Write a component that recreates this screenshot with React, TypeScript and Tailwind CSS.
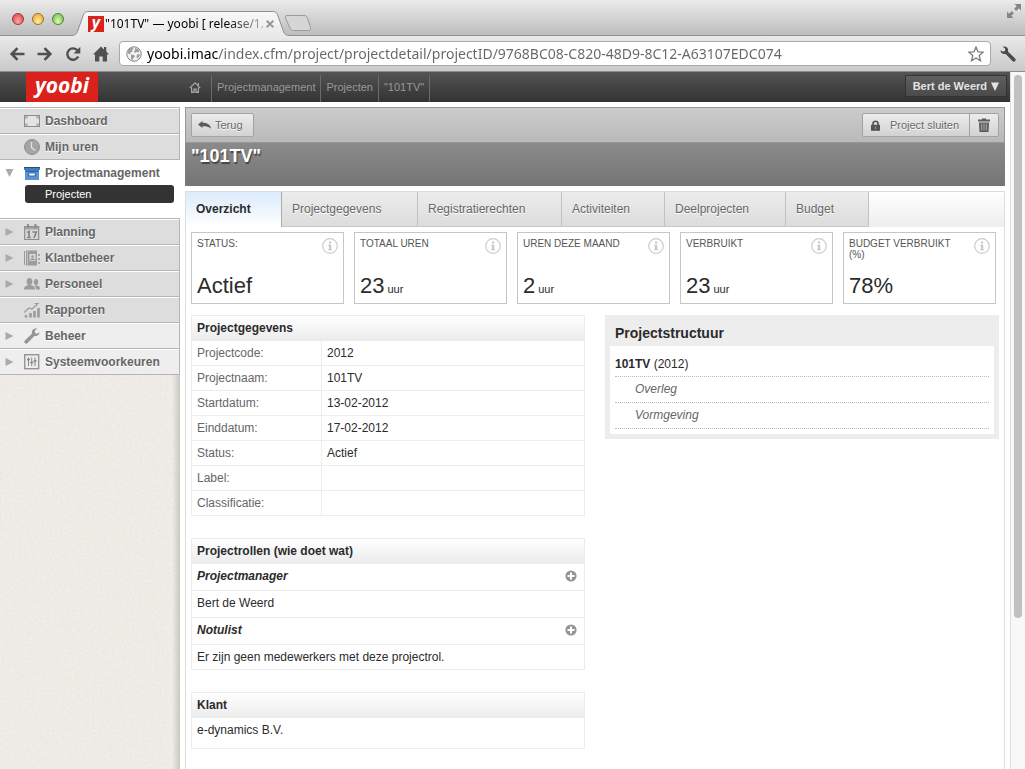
import { useState } from "react";
import type { ReactNode } from "react";
import clsx from "clsx";

interface MenuItem {
  label: string;
  icon: ReactNode;
  expandable?: boolean;
  light?: boolean;
}

interface Stat {
  label: string;
  value: string;
  unit?: string;
}

const DashboardIcon = () => (
  <svg viewBox="0 0 16 16" className="w-4 h-4">
    <rect x="0.5" y="2.5" width="15" height="11" fill="#b3b3b3" stroke="#8f8f8f" />
    <path d="M4 3h8c0 2 1 3 3 3v4c-2 0-3 1-3 3H4c0-2-1-3-3-3V6c2 0 3-1 3-3z" fill="#e4e4e4" />
  </svg>
);

const ClockIcon = () => (
  <svg viewBox="0 0 16 16" className="w-4 h-4">
    <circle cx="8" cy="8" r="7.5" fill="#a5a5a5" stroke="#8f8f8f" />
    <path d="M7.5 3v5.5l3.5 3" fill="none" stroke="#e2e2e2" strokeWidth="1.3" />
  </svg>
);

const ArchiveIcon = () => (
  <svg viewBox="0 0 16 16" className="w-4 h-4">
    <rect x="0" y="2" width="16" height="3" fill="#1d4f8c" />
    <rect x="0" y="3.5" width="16" height="1" fill="#6fa5dc" />
    <rect x="1" y="5" width="14" height="10" fill="#5a93d0" />
    <rect x="1.5" y="5.5" width="13" height="1.5" fill="#2c65a6" />
    <rect x="4" y="7.5" width="8" height="4" rx="1" fill="#3a74b5" />
    <rect x="5" y="8.5" width="6" height="2" rx="1" fill="#eef5fc" />
  </svg>
);

const CalendarIcon = () => (
  <svg viewBox="0 0 16 16" className="w-4 h-4">
    <path d="M.7 2.5h14v13h-14z" fill="#d8d8d8" stroke="#8c8c8c" strokeWidth="1.2" />
    <path d="M1 3h13.5v2.5H1z" fill="#a5a5a5" />
    <path d="M4 0v4M11.5 0v4" stroke="#8c8c8c" strokeWidth="2" />
    <path d="M3.2 8.5L5 7.5v6.5M3.2 13.5h3.6M8.3 8h4l-2.3 6" fill="none" stroke="#858585" strokeWidth="1.7" />
  </svg>
);

const AddressBookIcon = () => (
  <svg viewBox="0 0 16 16" className="w-4 h-4">
    <path d="M0.5 1v14" stroke="#999" />
    <rect x="2" y="0.5" width="11" height="15" fill="#9c9c9c" />
    <path d="M3.5 1v14" stroke="#d5d5d5" strokeWidth="0.6" />
    <rect x="5.5" y="4" width="6" height="7" fill="#dcdcdc" />
    <circle cx="8.5" cy="6.5" r="1.3" fill="#999" />
    <path d="M6 10.2c0-2.6 5-2.6 5 0z" fill="#999" />
    <path d="M15 4v2M15 8v2M15 12v2" stroke="#999" strokeWidth="1.6" />
  </svg>
);

const PeopleIcon = () => (
  <svg viewBox="0 0 16 16" className="w-4 h-4" fill="#9c9c9c">
    <ellipse cx="5.5" cy="5.5" rx="2.8" ry="3.5" />
    <path d="M0 13.5c0-3 1.5-3.2 4-4.5h3c2.5 1.3 4 1.5 4 4.5z" />
    <ellipse cx="12" cy="6" rx="2.2" ry="3" />
    <path d="M10.5 9.5h3c1.5.8 2.5 1 2.5 4h-4c0-2-.5-3-2-3.5z" />
  </svg>
);

const ReportIcon = () => (
  <svg viewBox="0 0 16 16" className="w-4 h-4">
    <path d="M2 13v2.5M6.5 11v4.5M10.5 9v6.5M14.5 6v9.5" stroke="#9c9c9c" strokeWidth="2.6" />
    <path d="M0 10.5l5-4.5 3 1 5.5-5M10.5 1.5h4.5" fill="none" stroke="#9c9c9c" strokeWidth="1.2" />
  </svg>
);

const WrenchIcon = ({ className, color }: { className: string; color: string }) => (
  <svg viewBox="0 0 16 16" className={className}>
    <path
      d="M15.5 4.2l-2.6 1.6-2-1 0-2.3L13.3.8C11.3-.1 8.6.7 8 3.2c-.2.9-.1 1.7.1 2.3L.9 12.4c-.9.9-.8 2 0 2.7.8.8 1.9.7 2.7-.2l6.7-7c2.7.8 5.2-.9 5.2-3.7z"
      fill={color}
    />
  </svg>
);

const SlidersIcon = () => (
  <svg viewBox="0 0 16 16" className="w-4 h-4">
    <rect x="0.7" y="0.7" width="14" height="14" fill="#ececec" stroke="#959595" strokeWidth="1.4" />
    <path d="M4.5 3.5v8.5M7.7 3.5v8.5M11 3.5v8.5" stroke="#888" />
    <path d="M3 5.5h3M6.2 8.5h3M9.5 7h3" stroke="#888" strokeWidth="1.4" />
  </svg>
);

const InfoIcon = () => (
  <svg viewBox="0 0 16 16" className="w-4 h-4 shrink-0">
    <circle cx="8" cy="8" r="7.3" fill="none" stroke="#ccc" strokeWidth="1.2" />
    <path d="M7 3.5h2.2v2H7zM6 6.7h3.2v4.5h1v1.1H6v-1.1h1V7.8H6z" fill="#c8c8c8" />
  </svg>
);

const PlusIcon = () => (
  <svg viewBox="0 0 12 12" className="w-3 h-3">
    <circle cx="6" cy="6" r="5.6" fill="#949494" />
    <path d="M6 2.5v7M2.5 6h7" stroke="#fff" strokeWidth="2" />
  </svg>
);

const menuTop: MenuItem[] = [
  { label: "Dashboard", icon: <DashboardIcon /> },
  { label: "Mijn uren", icon: <ClockIcon /> },
];

const menuBottom: MenuItem[] = [
  { label: "Planning", icon: <CalendarIcon />, expandable: true },
  { label: "Klantbeheer", icon: <AddressBookIcon />, expandable: true },
  { label: "Personeel", icon: <PeopleIcon />, expandable: true },
  { label: "Rapporten", icon: <ReportIcon /> },
  {
    label: "Beheer",
    icon: <WrenchIcon className="w-4 h-4" color="#959595" />,
    expandable: true,
    light: true,
  },
  { label: "Systeemvoorkeuren", icon: <SlidersIcon />, expandable: true, light: true },
];

const tabs = [
  { label: "Overzicht", width: "w-24" },
  { label: "Projectgegevens", width: "w-[136px]" },
  { label: "Registratierechten", width: "w-36" },
  { label: "Activiteiten", width: "w-[103px]" },
  { label: "Deelprojecten", width: "w-[121px]" },
  { label: "Budget", width: "w-[83px]" },
];

const stats: Stat[] = [
  { label: "STATUS:", value: "Actief" },
  { label: "TOTAAL UREN", value: "23", unit: "uur" },
  { label: "UREN DEZE MAAND", value: "2", unit: "uur" },
  { label: "VERBRUIKT", value: "23", unit: "uur" },
  { label: "BUDGET VERBRUIKT (%)", value: "78%" },
];

const details = [
  ["Projectcode:", "2012"],
  ["Projectnaam:", "101TV"],
  ["Startdatum:", "13-02-2012"],
  ["Einddatum:", "17-02-2012"],
  ["Status:", "Actief"],
  ["Label:", ""],
  ["Classificatie:", ""],
];

const roles = [
  { name: "Projectmanager", member: "Bert de Weerd" },
  { name: "Notulist", member: "Er zijn geen medewerkers met deze projectrol." },
];

const TitleBar = () => (
  <div className="flex h-9 items-end bg-linear-to-b from-[#ebebeb] to-[#bdbdbd] border-b border-[#929292]">
    <div className="flex gap-2 pl-3 pb-[10px]">
      <button aria-label="Sluit venster" className="w-3 h-3 rounded-full border border-[#9a3a38] bg-radial-[at_50%_75%] from-[#ffa9a5] to-[#d8383c]" />
      <button aria-label="Minimaliseer" className="w-3 h-3 rounded-full border border-[#a0722c] bg-radial-[at_50%_75%] from-[#fff0a0] to-[#e59b2c]" />
      <button aria-label="Vergroot" className="w-3 h-3 rounded-full border border-[#53853a] bg-radial-[at_50%_75%] from-[#dcffb0] to-[#64b344]" />
    </div>
    <div className="relative -mb-px ml-2 w-[220px] h-[25px]">
      <svg viewBox="0 0 220 25" className="absolute inset-0 w-full h-full">
        <defs>
          <linearGradient id="tab" x1="0" y1="0" x2="0" y2="1">
            <stop offset="0" stopColor="#f8f8f8" />
            <stop offset="1" stopColor="#e9e9e9" />
          </linearGradient>
        </defs>
        <path
          d="M0 25v-1c4 0 5-2 6-5L11 5c1-3 2-4.5 6-4.5h183c4 0 5 1.5 6 4.5l5 14c1 3 2 5 6 5v1z"
          fill="url(#tab)"
        />
        <path
          d="M0 24.5c4 0 5-2.5 6-5.5L11 5c1-3 2-4.5 6-4.5h183c4 0 5 1.5 6 4.5l5 14c1 3 2 5.5 6 5.5"
          fill="none"
          stroke="#8e8e8e"
        />
      </svg>
      <div className="relative flex items-center h-full pl-4 pr-[18px]">
        <span className="flex items-center justify-center w-4 h-4 bg-[#da211c] text-white font-['Open_Sans',sans-serif] font-bold italic text-base leading-3 pb-1">
          y
        </span>
        <span className="flex-1 ml-px whitespace-nowrap text-xs text-transparent bg-clip-text bg-linear-to-r from-black from-75% to-[#00000033] font-['Noto_Sans',sans-serif]">
          "101TV" — yoobi [ release/1.
        </span>
        <button aria-label="Sluit tabblad">
          <svg viewBox="0 0 8 8" className="w-2 h-2">
            <path d="M0.7 0.7l6.6 6.6M7.3 0.7L0.7 7.3" stroke="#999" strokeWidth="2" />
          </svg>
        </button>
      </div>
    </div>
    <button aria-label="Nieuw tabblad" className="-ml-2 pb-1">
      <svg viewBox="0 0 28 16" className="w-7 h-4">
        <path
          d="M3 .5h17c2 0 3 1 3.5 2.5l3 9.5c.5 2-.5 3-2 3H9.5c-2 0-3-1-3.5-2.5L1.5 3C1 1.5 1.5.5 3 .5z"
          fill="#d6d6d6"
          stroke="#9b9b9b"
        />
      </svg>
    </button>
    <button aria-label="Volledig scherm" className="ml-auto self-start pt-1 pr-1">
      <svg viewBox="0 0 14 14" className="w-[14px] h-[14px]" fill="#858585">
        <path d="M7.5 0H14v6.5l-2.2-2.2-2.6 2.6-2.1-2.1 2.6-2.6zM6.5 14H0V7.5l2.2 2.2 2.6-2.6 2.1 2.1-2.6 2.6z" />
      </svg>
    </button>
  </div>
);

const ToolBar = () => {
  const [url, setUrl] = useState(
    "yoobi.imac/index.cfm/project/projectdetail/projectID/9768BC08-C820-48D9-8C12-A63107EDC074",
  );

  return (
    <div className="flex items-center h-9 pl-[9px] pr-2 bg-linear-to-b from-[#eaeaea] to-[#c9c9c9] border-b border-[#8d8d8d]">
      <div className="flex gap-3 mr-[10px]">
        <button aria-label="Vorige">
          <svg viewBox="0 0 16 16" className="w-4 h-4" fill="none" stroke="#505050" strokeWidth="2.6">
            <path d="M8.5 2.2L2.7 8l5.8 5.8M3 8h12.5" />
          </svg>
        </button>
        <button aria-label="Volgende">
          <svg viewBox="0 0 16 16" className="w-4 h-4" fill="none" stroke="#505050" strokeWidth="2.6">
            <path d="M7.5 2.2L13.3 8l-5.8 5.8M13 8H.5" />
          </svg>
        </button>
        <button aria-label="Vernieuwen">
          <svg viewBox="0 0 16 16" className="w-4 h-4">
            <path d="M12.5 4.5A5.7 5.7 0 1 0 13.2 10.5" fill="none" stroke="#505050" strokeWidth="2.4" />
            <path d="M15.3.8v6.7H8.6z" fill="#505050" />
          </svg>
        </button>
        <button aria-label="Startpagina">
          <svg viewBox="0 0 16 16" className="w-4 h-4" fill="#505050">
            <path d="M8 .5l3 3V1h2.3v4.5L16 8.5h-2V15.5H9.7v-5H6.3v5H2V8.5H0z" />
          </svg>
        </button>
      </div>
      <div className="flex flex-1 items-center h-[25px] px-[6px] rounded-[4px] border border-[#a9a9a9] bg-white">
        <svg viewBox="0 0 16 16" className="w-4 h-4">
          <circle cx="8" cy="8" r="7.2" fill="#f4f4f4" stroke="#808080" />
          <path
            d="M2 5C3 3 5 1.7 7 1.5l.5 1.5-1.5 1L6.5 5.5l-2 1-.5 2-1.8-1zM9 2l3 1 1.5 2-1 1.5-2-.5-1.5 1-1-1.5 1-1.5zM5 8.5l3 .5 1 1.5-2 2-.5 2-1.5-1.5zM11 8.5l3-.5-1 3-2 1.5-.5-2z"
            fill="#9c9c9c"
          />
        </svg>
        <input
          aria-label="Adres"
          value={url}
          onChange={(e) => setUrl(e.target.value)}
          className="flex-1 ml-[5px] text-sm text-transparent caret-black bg-clip-text bg-linear-to-r from-black from-[71px] to-[#666] to-[71px] font-['Noto_Sans',sans-serif] focus:outline-none"
        />
        <button aria-label="Bladwijzer">
          <svg viewBox="0 0 16 16" className="w-4 h-4">
            <path
              d="M8 1l2 4.8 5.2.4-4 3.4 1.3 5.2L8 12l-4.5 2.8 1.3-5.2-4-3.4L6 5.8z"
              fill="#fff"
              stroke="#7a7a7a"
              strokeWidth="1.3"
            />
          </svg>
        </button>
      </div>
      <button aria-label="Instellingen" className="ml-2 -scale-x-100">
        <WrenchIcon className="w-[18px] h-4" color="#4a4a4a" />
      </button>
    </div>
  );
};

const AppHeader = () => (
  <header className="flex items-stretch h-[30px] pl-[26px] pr-[3px] bg-linear-to-b from-[#545454] to-[#333] text-[11px] text-[#999]">
    <a
      href="#"
      className="flex items-center justify-center w-[72px] pb-1 bg-[#da211c] text-white text-[21px] leading-6 font-bold italic font-['Open_Sans',sans-serif]"
    >
      yoobi
    </a>
    <nav aria-label="Kruimelpad" className="flex ml-[84px] pt-[3px] leading-6">
      <a href="#" aria-label="Home" className="flex items-center pl-[5px] pr-2 border-r border-[#6b6b6b]">
        <svg viewBox="0 0 16 16" className="w-4 h-4 pb-1" fill="none" stroke="#a5a5a5" strokeWidth="1.7">
          <path d="M1 9.5L8 2.5l7 7M3.5 8.5v6.5h3.2v-4h2.6v4h3.2V8.5M12.5 6V2.5" />
        </svg>
      </a>
      <a href="#" className="px-[5px] border-r border-[#6b6b6b]">Projectmanagement</a>
      <a href="#" className="px-[5px] border-r border-[#6b6b6b]">Projecten</a>
      <a href="#" className="px-[5px] border-r border-[#6b6b6b]">"101TV"</a>
    </nav>
    <button className="flex items-center self-start gap-1 mt-[3px] ml-auto h-[22px] px-[7px] border border-[#333] bg-linear-to-b from-[#606060] to-[#4a4a4a] text-[#e3e3e3] font-bold">
      Bert de Weerd
      <svg viewBox="0 0 8 9" className="w-2 h-[9px]" fill="#e3e3e3">
        <path d="M0 .5h8L4 9z" />
      </svg>
    </button>
  </header>
);

const MenuRow = ({ item }: { item: MenuItem }) => (
  <li>
    <a
      href="#"
      className={clsx(
        "flex items-center h-[26px] pl-[5px] border-r border-b border-[#b5b5b5] shadow-[inset_0_1px_0_#fff]",
        item.light ? "bg-[#eee]" : "bg-[#ddd]",
      )}
    >
      <svg viewBox="0 0 9 8" className="w-[9px] h-2 mr-[10px]">
        {item.expandable && <path d="M0.5 0l8 4-8 4z" fill="#aaa" />}
      </svg>
      {item.icon}
      <span className="ml-[5px]">{item.label}</span>
    </a>
  </li>
);

const Sidebar = () => (
  <aside className="flex flex-col w-[180px] shrink-0 text-xs font-bold text-[#666] [text-shadow:0_1px_0_#fff]">
    <ul className="border-t border-[#b5b5b5]">
      {menuTop.map((item) => (
        <MenuRow key={item.label} item={item} />
      ))}
    </ul>
    <div className="h-[58px] bg-white">
      <a href="#" className="flex items-center h-[25px] pl-[5px]">
        <svg viewBox="0 0 9 8" className="w-[9px] h-2 mr-[10px]">
          <path d="M0.5 0h8L4.5 8z" fill="#aaa" />
        </svg>
        <ArchiveIcon />
        <span className="ml-[5px]">Projectmanagement</span>
      </a>
      <a
        href="#"
        className="block h-[18px] ml-[25px] mr-[6px] pl-5 rounded-[3px] bg-[#333] text-[11px] leading-[18px] font-normal text-white [text-shadow:none]"
      >
        Projecten
      </a>
    </div>
    <ul className="border-t border-[#b5b5b5]">
      {menuBottom.map((item) => (
        <MenuRow key={item.label} item={item} />
      ))}
    </ul>
    <div className="relative flex-1 bg-[#efede7]">
      <svg className="absolute inset-0 w-full h-full opacity-10">
        <filter id="paper">
          <feTurbulence type="fractalNoise" baseFrequency="0.4" numOctaves="2" />
          <feColorMatrix values="0 0 0 0 0.5 0 0 0 0 0.45 0 0 0 0 0.35 0 0 2 0 -0.7" />
        </filter>
        <rect width="100%" height="100%" filter="url(#paper)" />
      </svg>
      <div className="absolute inset-y-0 right-0 w-2 bg-linear-to-r from-transparent to-[#00000026]" />
    </div>
  </aside>
);

const Panel = ({ title, children }: { title: string; children: ReactNode }) => (
  <section className="mb-[22px] border border-[#ececec]">
    <h2 className="h-[25px] pl-[5px] leading-6 font-bold bg-linear-to-b from-white to-[#ebebeb]">
      {title}
    </h2>
    {children}
  </section>
);

const Overview = () => (
  <div className="pl-[5px] pr-[5px] pt-[5px]">
    <div className="grid grid-cols-5 gap-[10px] pr-[3px]">
      {stats.map((stat) => (
        <div
          key={stat.label}
          className="flex flex-col justify-between h-[72px] pl-[5px] pr-[5px] pt-[5px] pb-[3px] border border-[#c6c6c6]"
        >
          <div className="flex items-start justify-between gap-2 h-4 text-[10px] leading-[11px] text-[#555]">
            <span>{stat.label}</span>
            <InfoIcon />
          </div>
          <p className="flex items-baseline gap-[3px] text-[22px] leading-7">
            {stat.value}
            {stat.unit && <span className="text-[11px] leading-3">{stat.unit}</span>}
          </p>
        </div>
      ))}
    </div>

    <div className="grid grid-cols-2 gap-5 mt-[11px] items-start">
      <div>
        <Panel title="Projectgegevens">
          <table className="w-full border-separate border-spacing-0">
            <tbody>
              {details.map(([label, value]) => (
                <tr key={label} className="group">
                  <th
                    scope="row"
                    className="w-[130px] h-[25px] group-last:h-6 p-0 pl-[5px] text-left font-normal text-[#666] border-r border-b group-last:border-b-0 border-[#ececec]"
                  >
                    {label}
                  </th>
                  <td className="p-0 pl-[5px] border-b group-last:border-b-0 border-[#ececec]">{value}</td>
                </tr>
              ))}
            </tbody>
          </table>
        </Panel>

        <Panel title="Projectrollen (wie doet wat)">
          {roles.map((role) => (
            <div key={role.name} className="group">
              <div className="flex items-start justify-between h-[27px] pl-[5px] pr-[7px] leading-6 border-b border-[#ececec]">
                <h3 className="font-bold italic">{role.name}</h3>
                <button aria-label={`${role.name} toevoegen`} className="pt-[6px]">
                  <PlusIcon />
                </button>
              </div>
              <p className="h-[27px] group-last:h-6 pl-[5px] leading-6 border-b group-last:border-b-0 border-[#ececec]">
                {role.member}
              </p>
            </div>
          ))}
        </Panel>

        <Panel title="Klant">
          <p className="h-[30px] pl-[5px] leading-6">e-dynamics B.V.</p>
        </Panel>
      </div>

      <section className="p-[5px] bg-[#ededed]">
        <h2 className="h-[26px] pl-[5px] text-sm leading-[26px] font-bold">Projectstructuur</h2>
        <ul className="px-[5px] pt-1 pb-[5px] bg-white">
          <li className="h-[27px] leading-7 border-b border-dotted border-[#bbb]">
            <b>101TV</b> (2012)
          </li>
          <li className="h-[26px] pl-5 leading-6 italic text-[#666] border-b border-dotted border-[#bbb]">
            Overleg
          </li>
          <li className="h-[26px] pl-5 leading-6 italic text-[#666] border-b border-dotted border-[#bbb]">
            Vormgeving
          </li>
        </ul>
      </section>
    </div>
  </div>
);

const buttonStyle =
  "flex items-center h-6 text-[11px] text-[#666] border border-[#a3a3a3] bg-linear-to-b from-[#ececec] to-[#d2d2d2] [text-shadow:0_1px_0_#fff]";

const ProjectPage = () => {
  const [activeTab, setActiveTab] = useState("Overzicht");

  return (
    <main className="flex flex-col flex-1 mx-[5px]">
      <div className="flex items-center justify-between h-9 px-[5px] border border-[#979797] bg-linear-to-b from-[#ccc] to-[#b9b9b9]">
        <button className={clsx(buttonStyle, "pl-[6px] pr-[10px] rounded-[2px]")}>
          <svg viewBox="0 0 13 8" className="w-[13px] h-2 mr-1">
            <path d="M0 3.5L4.5 0v1.8C9 1.8 12.5 3.5 13 7.8 11 5.5 8.5 5.2 4.5 5.2V7z" fill="#5a5a5a" />
          </svg>
          Terug
        </button>
        <div className="flex">
          <button className={clsx(buttonStyle, "pl-2 pr-[10px] rounded-l-[2px]")}>
            <svg viewBox="0 0 9 11" className="w-[9px] h-[11px] mr-[10px]">
              <path d="M2 6V3.7a2.5 2.5 0 0 1 5 0V6" fill="none" stroke="#555" strokeWidth="1.6" />
              <rect x="0" y="4.8" width="9" height="6" fill="#555" />
              <path d="M4.5 6.5v2.5" stroke="#999" strokeWidth="1.2" />
            </svg>
            Project sluiten
          </button>
          <button aria-label="Verwijderen" className={clsx(buttonStyle, "-ml-px px-2 rounded-r-[2px]")}>
            <svg viewBox="0 0 12 14" className="w-3 h-[14px]">
              <path d="M4 1.5V.5h4v1h4v2H0v-2zM1 4.5h10L10.5 14h-9z" fill="#5a5a5a" />
              <path d="M3.7 5.5v7M6 5.5v7M8.3 5.5v7" stroke="#c4c4c4" strokeWidth="0.8" />
            </svg>
          </button>
        </div>
      </div>
      <h1 className="h-[43px] pl-[6px] pt-px bg-linear-to-b from-[#8a8a8a] to-[#757575] text-lg leading-6 font-bold text-white [text-shadow:1px_2px_1px_#444]">
        "101TV"
      </h1>

      <div className="flex-1 mt-[5px] border border-b-0 border-[#ddd]">
        <div role="tablist" className="flex h-[35px] bg-linear-to-b from-white to-[#eee]">
          {tabs.map((tab) => (
            <button
              key={tab.label}
              role="tab"
              aria-selected={tab.label === activeTab}
              onClick={() => setActiveTab(tab.label)}
              className={clsx(
                "pl-[10px] pb-[2px] text-left text-xs border-r",
                tab.width,
                tab.label === activeTab
                  ? "bg-linear-to-b from-[#dcebfc] to-white font-bold border-[#aaa]"
                  : "bg-linear-to-b from-[#ececec] to-[#dcdcdc] text-[#666] border-[#c2c2c2] shadow-[inset_0_-1px_0_#c8c8c8] [text-shadow:0_1px_0_#fff]",
              )}
            >
              {tab.label}
            </button>
          ))}
        </div>
        <Overview />
      </div>
    </main>
  );
};

const App = () => {
  return (
    <div className="flex flex-col min-h-screen bg-white text-[#2b2b2b] font-['Liberation_Sans',Arial,sans-serif]">
      <TitleBar />
      <ToolBar />
      <div className="flex flex-1">
        <div className="flex flex-col flex-1">
          <AppHeader />
          <div className="flex flex-1 pt-[5px] text-xs">
            <Sidebar />
            <ProjectPage />
          </div>
        </div>
        <div className="w-[15px] px-[3px] pt-[3px] border-l border-[#dedede] bg-[#f8f8f8]">
          <div className="w-2 h-[78%] rounded-full bg-[#c1c1c1]" />
        </div>
      </div>
    </div>
  );
};

export default App;
